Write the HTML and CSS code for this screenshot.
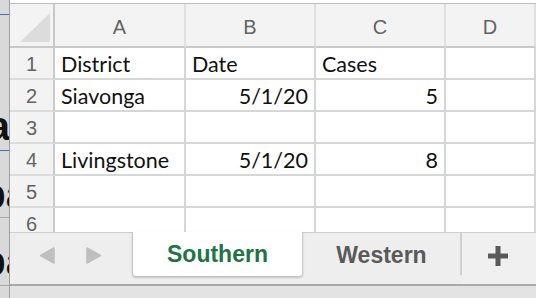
FILE: index.html
```html
<!DOCTYPE html>
<html>
<head>
<meta charset="utf-8">
<link rel="stylesheet" href="styles.css">
</head>
<body>
<div class="desk">
  <div class="behind">
    <div class="bg-gap g1"></div>
    <div class="bg-rule blue"></div>
    <div class="bg-gap g2"></div>
    <div class="bg-word w1"><span>a</span></div>
    <div class="bg-gap g3"></div>
    <div class="bg-rule blue"></div>
    <div class="bg-gap g4"></div>
    <div class="bg-word w2"><span>pa</span></div>
    <div class="bg-gap g5"></div>
    <div class="bg-rule grey"></div>
    <div class="bg-gap g6"></div>
    <div class="bg-word w2"><span>pa</span></div>
    <div class="bg-gap g7"></div>
    <div class="bg-rule grey"></div>
  </div>
  <div class="win">
    <div class="topedge"></div>
    <div class="sheet">
      <div class="row hdr">
        <div class="corner"><svg width="45" height="42" viewBox="0 0 45 42"><polygon points="10,38 40,38 40,9" fill="#dcdcdc"/></svg></div>
        <div class="col">A</div>
        <div class="col">B</div>
        <div class="col">C</div>
        <div class="col">D</div>
      </div>
      <div class="row">
        <div class="rn">1</div>
        <div class="cell">District</div>
        <div class="cell">Date</div>
        <div class="cell">Cases</div>
        <div class="cell"></div>
      </div>
      <div class="row">
        <div class="rn">2</div>
        <div class="cell">Siavonga</div>
        <div class="cell num">5/1/20</div>
        <div class="cell num">5</div>
        <div class="cell"></div>
      </div>
      <div class="row">
        <div class="rn">3</div>
        <div class="cell"></div>
        <div class="cell"></div>
        <div class="cell"></div>
        <div class="cell"></div>
      </div>
      <div class="row">
        <div class="rn">4</div>
        <div class="cell">Livingstone</div>
        <div class="cell num">5/1/20</div>
        <div class="cell num">8</div>
        <div class="cell"></div>
      </div>
      <div class="row">
        <div class="rn">5</div>
        <div class="cell"></div>
        <div class="cell"></div>
        <div class="cell"></div>
        <div class="cell"></div>
      </div>
      <div class="row">
        <div class="rn">6</div>
        <div class="cell"></div>
        <div class="cell"></div>
        <div class="cell"></div>
        <div class="cell"></div>
      </div>
    </div>
    <div class="tabs">
      <div class="nav">
        <svg class="arrow" width="16" height="17" viewBox="0 0 16 17"><path d="M15 1 L15 16 L1.5 8.5 Z" fill="#bfbfbf" stroke="#bfbfbf" stroke-width="1.5" stroke-linejoin="round"/></svg>
        <svg class="arrow" width="16" height="17" viewBox="0 0 16 17"><path d="M1 1 L1 16 L14.5 8.5 Z" fill="#bfbfbf" stroke="#bfbfbf" stroke-width="1.5" stroke-linejoin="round"/></svg>
      </div>
      <div class="tab active">Southern</div>
      <div class="tab other">Western</div>
      <div class="sep"></div>
      <div class="add">
        <svg width="20" height="20" viewBox="0 0 20 20"><rect x="0" y="7.5" width="20" height="5" fill="#5a5a5a"/><rect x="7.5" y="0" width="5" height="20" fill="#5a5a5a"/></svg>
      </div>
    </div>
    <div class="status"></div>
  </div>
</div>
</body>
</html>
```

FILE: styles.css
```css
html, body {
  margin: 0;
  padding: 0;
}
body {
  width: 536px;
  height: 298px;
  overflow: hidden;
  background: #fff;
  font-family: "Liberation Sans", Arial, sans-serif;
}
.desk {
  display: flex;
  height: 298px;
}
.behind {
  width: 9px;
  flex: none;
  background: #d9d9d9;
  overflow: hidden;
  display: flex;
  flex-direction: column;
}
.bg-gap { flex: none; }
.g1 { height: 14px; }
.g2 { height: 94px; }
.g3 { height: 6px; }
.g4 { height: 26px; }
.g5 { height: 5px; }
.g6 { height: 26px; }
.g7 { height: 6px; }
.bg-rule { height: 1px; flex: none; }
.bg-rule.blue { background: #3d6fc2; }
.bg-rule.grey { background: #a8a8a8; }
.bg-word {
  height: 35px;
  width: 9px;
  flex: none;
  overflow: hidden;
  display: flex;
  justify-content: flex-end;
  font-weight: bold;
  font-size: 40px;
  line-height: 35px;
  color: #111;
  white-space: nowrap;
}
.w1 span { margin-right: -1px; }
.w2 span { margin-right: -19px; }

.win {
  flex: 1;
  border-left: 1px solid #9f9f9f;
  display: flex;
  flex-direction: column;
  overflow: hidden;
  background: #fff;
}
.topedge {
  height: 3px;
  flex: none;
  background: #fff;
  border-bottom: 1px solid #bdbdbd;
}
.sheet {
  height: 228px;
  flex: none;
  overflow: hidden;
}
.row {
  display: grid;
  grid-template-columns: 45px 131px 130px 130px 1fr;
  height: 32px;
}
.row > div {
  box-sizing: border-box;
  border-bottom: 2px solid #d6d6d6;
  border-right: 2px solid #d6d6d6;
}
.row.hdr {
  height: 44px;
  background: #f3f3f3;
}
.row.hdr > div {
  border-bottom: 2px solid #c9c9c9;
  border-right: 2px solid #e0e0e0;
}
.row.hdr > .corner {
  border-right: 2px solid #c9c9c9;
}
.corner svg { display: block; }
.col {
  font-size: 20px;
  color: #636363;
  display: flex;
  align-items: center;
  justify-content: center;
  padding-top: 4px;
}
.row > .rn {
  background: #f3f3f3;
  border-right: 2px solid #c9c9c9;
  border-bottom: 2px solid #dcdcdc;
  font-size: 20px;
  color: #636363;
  display: flex;
  align-items: center;
  justify-content: center;
  padding-top: 2px;
}
.cell {
  font-family: "Lato", "Liberation Sans", sans-serif;
  font-size: 21.5px;
  color: #111;
  padding: 2px 6px 0 6px;
  display: flex;
  align-items: center;
  white-space: nowrap;
}
.cell.num {
  justify-content: flex-end;
  padding-right: 6px;
}

.tabs {
  height: 52px;
  flex: none;
  display: flex;
  background: #eeeeee;
}
.nav {
  width: 122px;
  flex: none;
  box-sizing: border-box;
  border-top: 1px solid #cfcfcf;
  display: flex;
  align-items: center;
  gap: 31px;
  padding-left: 29px;
  padding-bottom: 6px;
}
.arrow { display: block; }
.tab {
  flex: none;
  box-sizing: border-box;
  font-weight: bold;
  font-size: 23px;
  display: flex;
  align-items: center;
  justify-content: center;
}
.tab.active {
  width: 171px;
  height: 45px;
  background: #fff;
  color: #217346;
  border-left: 1px solid #c9c9c9;
  border-right: 1px solid #c9c9c9;
  border-bottom: 1px solid #c2c2c2;
  border-radius: 0 0 4px 4px;
  box-shadow: 0 1px 2px rgba(0, 0, 0, 0.18);
  padding-top: 1px;
}
.tab.other {
  width: 157px;
  height: 52px;
  color: #5a5a5a;
  border-top: 1px solid #cfcfcf;
  padding-bottom: 6px;
}
.sep {
  width: 2px;
  flex: none;
  height: 42px;
  margin-top: 1px;
  background: #d0d0d0;
  box-shadow: 0 -1px 0 #cfcfcf;
}
.add {
  flex: 1;
  box-sizing: border-box;
  border-top: 1px solid #cfcfcf;
  display: flex;
  align-items: center;
  justify-content: center;
  padding-bottom: 6px;
  padding-right: 2px;
  background: #f0f0f0;
}
.status {
  flex: 1;
  border-top: 2px solid #aaaaaa;
  background: #e3e3e3;
}
```
